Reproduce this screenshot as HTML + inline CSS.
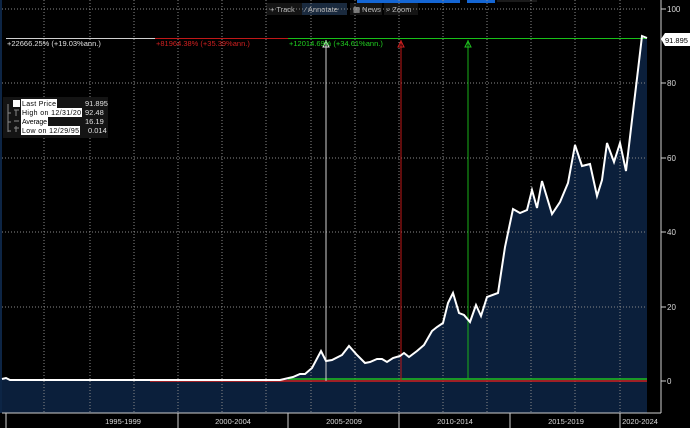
<!DOCTYPE html>
<html><head><meta charset="utf-8"><style>
html,body{margin:0;padding:0;background:#000;}
body{width:690px;height:428px;overflow:hidden;position:relative;font-family:"Liberation Sans",sans-serif;}
svg{position:absolute;left:0;top:0;}
</style></head><body>
<svg width="690" height="428" viewBox="0 0 690 428" font-family="Liberation Sans, sans-serif">
<rect width="690" height="428" fill="#000"/>
<rect x="357" y="0" width="103" height="3" fill="#1466d4"/>
<rect x="467" y="0" width="28" height="3" fill="#1466d4"/>
<rect x="497" y="0" width="40" height="2" fill="#1a1a1a"/>
<rect x="266" y="3" width="36" height="12" fill="#141414"/>
<rect x="302" y="3" width="45" height="12" fill="#1a2a3e"/>
<rect x="350" y="3" width="32" height="12" fill="#141414"/>
<rect x="384" y="3" width="34" height="12" fill="#141414"/>
<g font-size="7.5" fill="#b8b8b8">
<text x="270" y="12">+ Track</text>
<text x="305" y="12">⁄ Annotate</text>
<text x="353" y="12">▦ News</text>
<text x="386" y="12">⌕ Zoom</text>
</g>
<path d="M2,413 L2,379 L6,378 L10,380 L20,380 L280,380 L293,377 L300,374 L305,374 L312,368 L321,351 L326,361 L332,360 L342,355 L349,346 L357,355 L365,363 L370,362 L377,359 L382,359 L387,362 L393,358 L400,356 L404,353 L409,357 L417,351 L424,345 L432,331 L437,327 L443,323 L448,303 L453,293 L459,313 L464,315 L470,322 L476,305 L481,316 L487,297 L498,293 L505,247 L513,209 L520,213 L527,210 L532,190 L537,208 L542,181 L552,214 L560,202 L568,183 L575,145 L582,166 L590,164 L597,196 L602,180 L607,143 L614,162 L620,143 L626,171 L632,120 L638,70 L642,36 L647,38 L647,413 Z" fill="#0b1f3b"/>
<g stroke="#8a8a8a" stroke-width="1" stroke-dasharray="1,2">
<line x1="44" y1="0" x2="44" y2="413"/><line x1="90" y1="0" x2="90" y2="413"/>
<line x1="134" y1="0" x2="134" y2="413"/><line x1="178" y1="0" x2="178" y2="413"/>
<line x1="222" y1="0" x2="222" y2="413"/><line x1="266" y1="0" x2="266" y2="413"/>
<line x1="311" y1="0" x2="311" y2="413"/><line x1="355" y1="0" x2="355" y2="413"/>
<line x1="399" y1="0" x2="399" y2="413"/><line x1="443" y1="0" x2="443" y2="413"/>
<line x1="487" y1="0" x2="487" y2="413"/><line x1="531" y1="0" x2="531" y2="413"/>
<line x1="575" y1="0" x2="575" y2="413"/><line x1="620" y1="0" x2="620" y2="413"/>
<line x1="2" y1="9" x2="647" y2="9"/><line x1="2" y1="83" x2="647" y2="83"/>
<line x1="2" y1="158" x2="647" y2="158"/><line x1="2" y1="232" x2="647" y2="232"/>
<line x1="2" y1="307" x2="647" y2="307"/>
</g>
<line x1="1" y1="0" x2="1" y2="413" stroke="#1a4a8a"/>
<line x1="150" y1="381" x2="647" y2="381" stroke="#d02020" stroke-width="1.5"/>
<line x1="288" y1="379" x2="647" y2="379" stroke="#20c020" stroke-width="1.5"/>
<line x1="326" y1="40" x2="326" y2="381" stroke="#d0d0d0"/>
<line x1="401" y1="40" x2="401" y2="381" stroke="#c01818"/>
<line x1="468" y1="40" x2="468" y2="379" stroke="#18b018"/>
<line x1="6" y1="38.5" x2="155" y2="38.5" stroke="#d0d0d0"/>
<line x1="155" y1="38.5" x2="288" y2="38.5" stroke="#c01818"/>
<line x1="288" y1="38.5" x2="647" y2="38.5" stroke="#18c018"/>
<path d="M323,47 L326,41 L329,47 Z" fill="none" stroke="#e0e0e0"/>
<path d="M398,47 L401,41 L404,47 Z" fill="none" stroke="#d02020"/>
<path d="M465,47 L468,41 L471,47 Z" fill="none" stroke="#20c020"/>
<g font-size="7.5">
<text x="7" y="46" fill="#e0e0e0">+22666.25% (+19.03%ann.)</text>
<text x="156" y="46" fill="#d02020">+81964.38% (+35.39%ann.)</text>
<text x="289" y="46" fill="#20d020">+12014.69% (+34.61%ann.)</text>
</g>
<path d="M2,379 L6,378 L10,380 L20,380 L280,380 L293,377 L300,374 L305,374 L312,368 L321,351 L326,361 L332,360 L342,355 L349,346 L357,355 L365,363 L370,362 L377,359 L382,359 L387,362 L393,358 L400,356 L404,353 L409,357 L417,351 L424,345 L432,331 L437,327 L443,323 L448,303 L453,293 L459,313 L464,315 L470,322 L476,305 L481,316 L487,297 L498,293 L505,247 L513,209 L520,213 L527,210 L532,190 L537,208 L542,181 L552,214 L560,202 L568,183 L575,145 L582,166 L590,164 L597,196 L602,180 L607,143 L614,162 L620,143 L626,171 L632,120 L638,70 L642,36 L647,38" fill="none" stroke="#fff" stroke-width="2"/>
<line x1="661" y1="0" x2="661" y2="413" stroke="#cfcfcf"/>
<g stroke="#cfcfcf"><line x1="661" y1="9" x2="666" y2="9"/><line x1="661" y1="83" x2="666" y2="83"/><line x1="661" y1="158" x2="666" y2="158"/><line x1="661" y1="232" x2="666" y2="232"/><line x1="661" y1="307" x2="666" y2="307"/><line x1="661" y1="381" x2="666" y2="381"/></g>
<g font-size="8" fill="#d8d8d8">
<text x="667" y="12">100</text><text x="667" y="86">80</text><text x="667" y="161">60</text><text x="667" y="235">40</text><text x="667" y="310">20</text><text x="667" y="384">0</text>
</g>
<path d="M661,39 L665,33 L690,33 L690,46 L665,46 Z" fill="#fff"/>
<text x="665" y="43" font-size="7.5" fill="#000">91.895</text>
<line x1="2" y1="413" x2="661" y2="413" stroke="#cfcfcf"/>
<g stroke="#cfcfcf"><line x1="6" y1="413" x2="6" y2="428"/><line x1="178" y1="413" x2="178" y2="428"/><line x1="288" y1="413" x2="288" y2="428"/><line x1="399" y1="413" x2="399" y2="428"/><line x1="510" y1="413" x2="510" y2="428"/><line x1="620" y1="413" x2="620" y2="428"/></g>
<g font-size="7.5" fill="#d8d8d8" text-anchor="middle">
<text x="123" y="424">1995-1999</text><text x="233" y="424">2000-2004</text><text x="344" y="424">2005-2009</text><text x="455" y="424">2010-2014</text><text x="566" y="424">2015-2019</text><text x="640" y="424">2020-2024</text>
</g>
<rect x="3" y="97" width="105" height="41" fill="#141414"/>
<rect x="13" y="100" width="7" height="7" fill="#fff"/>
<rect x="21" y="99" width="36" height="9" fill="#fff"/>
<rect x="21" y="108" width="61" height="9" fill="#fff"/>
<rect x="21" y="117" width="27" height="9" fill="#fff"/>
<rect x="21" y="126" width="59" height="9" fill="#fff"/>
<g font-size="7" fill="#000"><text x="22" y="106" textLength="34">Last Price</text><text x="22" y="115" textLength="59">High on 12/31/20</text><text x="22" y="124" textLength="25">Average</text><text x="22" y="133" textLength="57">Low on 12/29/95</text></g>
<g font-size="7.5" fill="#e0e0e0"><text x="85" y="106">91.895</text><text x="85" y="115">92.48</text><text x="85" y="124">16.19</text><text x="88" y="133">0.014</text></g>
<g stroke="#888" fill="none"><path d="M8,104 V132 M8,113 H11 M8,122 H11 M8,131 H11 M14,110 H19 M16,110 V116 M14,121 H19 M14,128 H19 M16,126 V132"/></g>
</svg>
</body></html>
